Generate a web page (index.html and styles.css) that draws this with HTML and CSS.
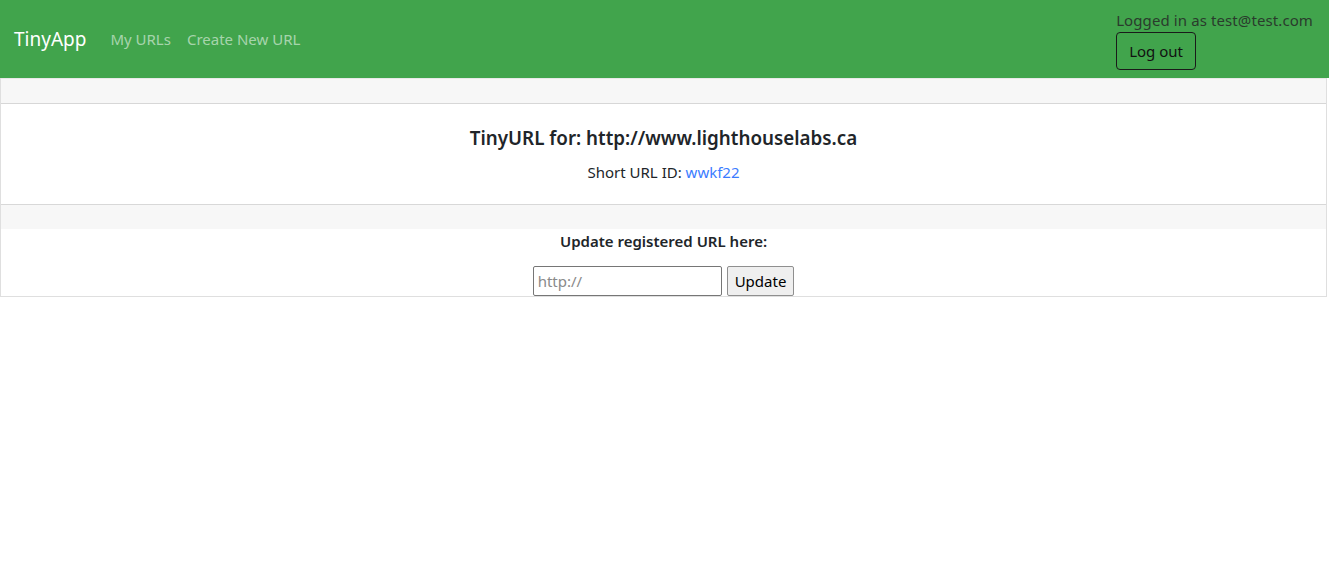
FILE: index.html
```html
<!DOCTYPE html>
<html lang="en">
<head>
<meta charset="utf-8">
<title>TinyApp</title>
<link rel="stylesheet" href="styles.css">
</head>
<body>
<nav class="navbar">
  <div class="nav-left">
    <a class="brand" href="#">TinyApp</a>
    <a class="nav-link" href="#">My URLs</a>
    <a class="nav-link" href="#">Create New URL</a>
  </div>
  <div class="nav-right">
    <div class="logged">Logged in as test@test.com</div>
    <button class="btn-logout" type="button">Log out</button>
  </div>
</nav>
<main class="card">
  <div class="card-header"></div>
  <div class="card-body">
    <h5 class="card-title">TinyURL for: http://www.lighthouselabs.ca</h5>
    <p class="card-text">Short URL ID: <a href="#">wwkf22</a></p>
  </div>
  <div class="card-footer"></div>
  <div class="update">
    <h6 class="update-title">Update registered URL here:</h6>
    <form class="update-form">
      <input class="url-input" type="text" placeholder="http://">
      <button class="btn-update" type="submit">Update</button>
    </form>
  </div>
</main>
</body>
</html>
```
FILE: styles.css
```css
* { box-sizing: border-box; }
html, body { margin: 0; padding: 0; }
body {
  font-family: "Noto Sans", "Open Sans", sans-serif;
  font-size: 15px;
  line-height: 24px;
  color: #212529;
  background: #fff;
}
.navbar {
  height: 78px;
  background: #41a44c;
  display: flex;
  justify-content: space-between;
  align-items: center;
  padding: 8px 16px 8px 14px;
}
.nav-left { display: flex; align-items: center; }
.brand {
  color: #fff;
  font-size: 19px;
  text-decoration: none;
  margin-right: 16px;
  padding: 5px 0;
}
.nav-link {
  color: rgba(255, 255, 255, 0.55);
  text-decoration: none;
  padding: 8px 8px;
}
.nav-right {
  display: flex;
  flex-direction: column;
  align-items: flex-start;
}
.logged { color: #2a3b2c; letter-spacing: 0.1px; }
.btn-logout {
  font: inherit;
  color: #111;
  background: transparent;
  border: 1px solid #1a1a1a;
  border-radius: 4px;
  padding: 6px 12px;
  height: 38px;
}
.card {
  margin: 0 2px 0 0;
  border: 1px solid rgba(0, 0, 0, 0.125);
  border-top: 0;
}
.card-header {
  height: 26px;
  background: #f7f7f7;
  border-top: 1px solid rgba(0,0,0,0.06);
  border-bottom: 1px solid rgba(0, 0, 0, 0.125);
}
.card-body {
  padding: 22px 20px 20px;
  text-align: center;
}
.card-title {
  margin: 0 0 10px;
  font-size: 18.8px;
  line-height: 24px;
  font-weight: 600;
}
.card-text { margin: 0; }
.card-text a { color: #3b7cff; text-decoration: none; }
.card-footer {
  height: 25px;
  background: #f7f7f7;
  border-top: 1px solid rgba(0, 0, 0, 0.125);
}
.update {
  text-align: center;
  padding-bottom: 0;
}
.update-title {
  margin: 0 0 13px;
  font-size: 15px;
  line-height: 24px;
  font-weight: 600;
}
.update-form {
  display: flex;
  justify-content: center;
  gap: 5px;
}
.url-input {
  width: 189px;
  height: 30px;
  font: inherit;
  font-size: 15px;
  padding: 1px 4px;
  border: 1px solid #767676;
  border-radius: 2px;
}
.url-input::placeholder { color: #8a8a8a; }
.btn-update {
  height: 30px;
  font: inherit;
  font-size: 15px;
  padding: 1px 7px;
  background: #efefef;
  border: 1px solid #8f8f8f;
  border-radius: 2px;
  color: #000;
}
```
